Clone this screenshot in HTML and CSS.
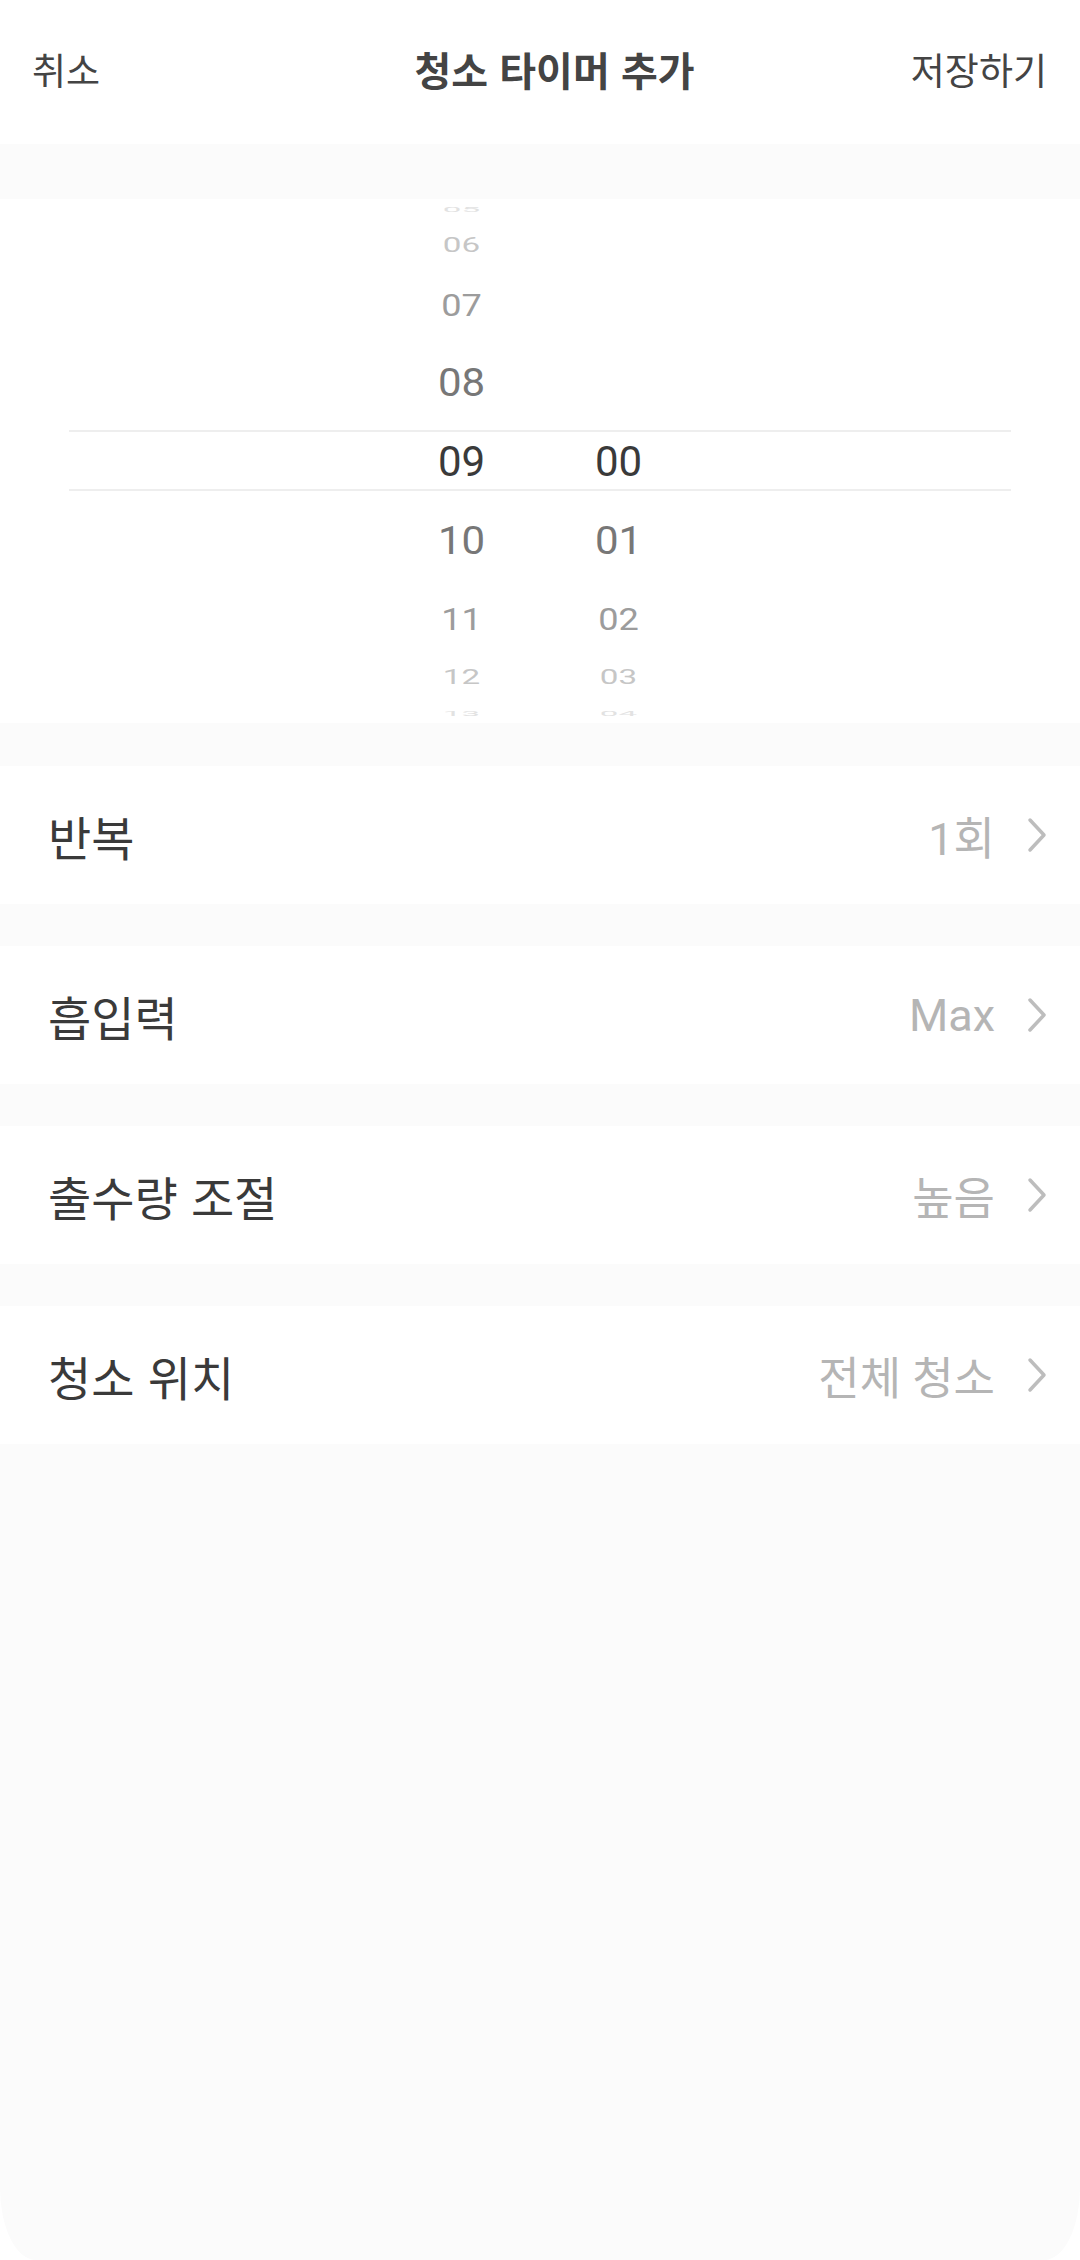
FILE: index.html
```html
<!DOCTYPE html>
<html lang="ko">
<head>
    <meta charset="UTF-8">
    <meta name="viewport" content="width=device-width, initial-scale=1.0">
    <title>청소 타이머 추가</title>
    <link rel="stylesheet" href="styles.css">
</head>
<body>
    <div class="screen">
        <header class="topbar">
            <button type="button" class="topbar-btn cancel">취소</button>
            <h1 class="topbar-title">청소 타이머 추가</h1>
            <button type="button" class="topbar-btn save">저장하기</button>
        </header>

        <div class="spacer top-spacer"></div>

        <section class="picker">
            <div class="wheel">
                <div class="slot far2">05</div>
                <div class="slot far1">06</div>
                <div class="slot near2">07</div>
                <div class="slot near1">08</div>
                <div class="slot current">09</div>
                <div class="slot near1">10</div>
                <div class="slot near2">11</div>
                <div class="slot far1">12</div>
                <div class="slot far2">13</div>
            </div>
            <div class="wheel">
                <div class="slot far2"></div>
                <div class="slot far1"></div>
                <div class="slot near2"></div>
                <div class="slot near1"></div>
                <div class="slot current">00</div>
                <div class="slot near1">01</div>
                <div class="slot near2">02</div>
                <div class="slot far1">03</div>
                <div class="slot far2">04</div>
            </div>
            <div class="selection"></div>
        </section>

        <ul class="options">
            <li class="option">
                <span class="option-label">반복</span>
                <span class="option-value">1회</span>
                <svg class="chevron" viewBox="0 0 20 36"><path d="M3 3 L17 18 L3 33"/></svg>
            </li>
            <li class="option">
                <span class="option-label">흡입력</span>
                <span class="option-value">Max</span>
                <svg class="chevron" viewBox="0 0 20 36"><path d="M3 3 L17 18 L3 33"/></svg>
            </li>
            <li class="option">
                <span class="option-label">출수량 조절</span>
                <span class="option-value">높음</span>
                <svg class="chevron" viewBox="0 0 20 36"><path d="M3 3 L17 18 L3 33"/></svg>
            </li>
            <li class="option">
                <span class="option-label">청소 위치</span>
                <span class="option-value">전체 청소</span>
                <svg class="chevron" viewBox="0 0 20 36"><path d="M3 3 L17 18 L3 33"/></svg>
            </li>
        </ul>

        <div class="filler"></div>
    </div>
</body>
</html>
```

FILE: styles.css
```css
* {
    box-sizing: border-box;
}
body {
    margin: 0;
    padding: 0;
    background-color: #fff;
    font-family: 'Noto Sans CJK KR', 'Noto Sans', sans-serif;
    color: #333;
}
.screen {
    display: flex;
    flex-direction: column;
    height: 100vh;
}
.topbar {
    height: 144px;
    flex-shrink: 0;
    display: grid;
    grid-template-columns: 1fr auto 1fr;
    align-items: center;
    padding: 0 33px 6px 32px;
    background-color: #fff;
}
.topbar-btn {
    background: none;
    border: none;
    padding: 0;
    font-family: inherit;
    font-size: 37px;
    color: #444;
    cursor: pointer;
}
.cancel {
    justify-self: start;
}
.save {
    justify-self: end;
}
.topbar-title {
    margin: 0 0 0 30px;
    font-size: 40px;
    font-weight: 700;
    color: #444;
}
.spacer {
    flex-shrink: 0;
    background-color: #fbfbfb;
}
.top-spacer {
    height: 55px;
}
.picker {
    position: relative;
    height: 524px;
    flex-shrink: 0;
    display: flex;
    justify-content: center;
    align-items: center;
    overflow: hidden;
    background-color: #fff;
}
.wheel {
    width: 157px;
    display: flex;
    flex-direction: column;
    align-items: center;
    font-family: 'Roboto', sans-serif;
    font-size: 42px;
}
.slot {
    width: 100%;
    text-align: center;
}
.current {
    height: 79px;
    line-height: 79px;
    color: #3a3a3a;
}
.near1 {
    height: 79px;
    line-height: 79px;
    color: #777;
    transform: scaleY(0.93);
}
.near2 {
    height: 77px;
    line-height: 77px;
    color: #9c9c9c;
    transform: scale(0.86, 0.76);
}
.far1 {
    height: 41px;
    line-height: 41px;
    color: #c6c6c6;
    transform: scale(0.79, 0.47);
}
.far2 {
    height: 31px;
    line-height: 31px;
    color: #e2e2e2;
    transform: scale(0.79, 0.16);
}
.selection {
    position: absolute;
    left: 69px;
    right: 69px;
    top: 231px;
    height: 61px;
    border-top: 2px solid #eeeeee;
    border-bottom: 2px solid #eeeeee;
    pointer-events: none;
}
.options {
    list-style: none;
    margin: 0;
    padding: 43px 0 42px;
    display: flex;
    flex-direction: column;
    gap: 42px;
    background-color: #fbfbfb;
}
.option {
    height: 138px;
    display: flex;
    align-items: center;
    padding: 0 33px 0 48px;
    background-color: #fff;
}
.option-label {
    flex: 1;
    font-size: 47px;
    color: #3a3a3a;
}
.option-value {
    font-family: 'Roboto', 'Noto Sans CJK KR', sans-serif;
    font-size: 45px;
    color: #b5b5b5;
}
.chevron {
    width: 20px;
    height: 36px;
    margin-left: 32px;
    fill: none;
    stroke: #bdbdbd;
    stroke-width: 3.5;
    stroke-linecap: round;
    stroke-linejoin: round;
}
.filler {
    flex: 1;
    margin-top: -42px;
    background-color: #fbfbfb;
    border-radius: 0 0 36px 36px / 0 0 72px 72px;
}
```
